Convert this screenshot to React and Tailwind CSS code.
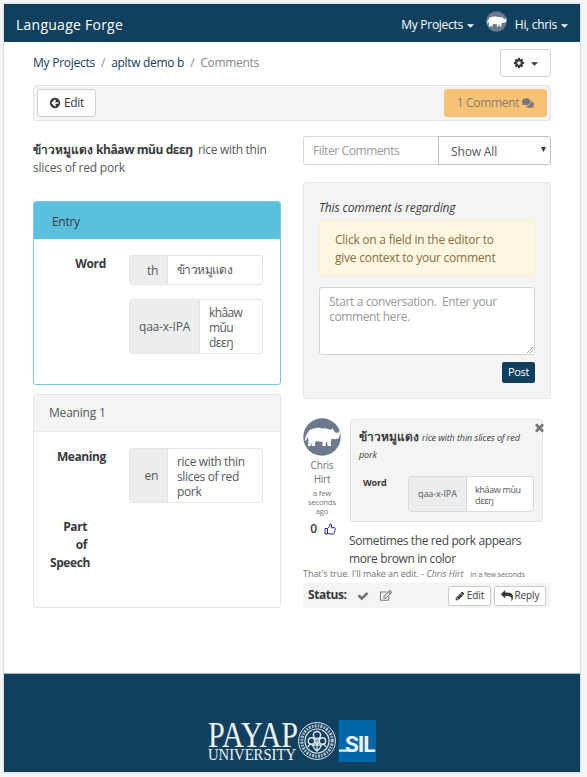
import React from "react";
import { FaComments, FaRegEdit } from "react-icons/fa";

const PATHS = {
  times:
    "M1490 1322q0 40-28 68l-136 136q-28 28-68 28t-68-28l-294-294-294 294q-28 28-68 28t-68-28l-136-136q-28-28-28-68t28-68l294-294-294-294q-28-28-28-68t28-68l136-136q28-28 68-28t68 28l294 294 294-294q28-28 68-28t68 28l136 136q28 28 28 68t-28 68l-294 294 294 294q28 28 28 68z",
  check:
    "M1671 566q0 40-28 68l-724 724-136 136q-28 28-68 28t-68-28l-136-136-362-362q-28-28-28-68t28-68l136-136q28-28 68-28t68 28l294 295 656-657q28-28 68-28t68 28l136 136q28 28 28 68z",
  back:
    "M1408 960v-128q0-26-19-45t-45-19h-502l189-189q19-19 19-45t-19-45l-91-91q-18-18-45-18t-45 18l-362 362-91 91q-18 18-18 45t18 45l91 91 362 362q18 18 45 18t45-18l91-91q18-18 18-45t-18-45l-189-189h502q26 0 45-19t19-45zm256-64q0 209-103 385.5t-279.5 279.5-385.5 103-385.5-103-279.5-279.5-103-385.5 103-385.5 279.5-279.5 385.5-103 385.5 103 279.5 279.5 103 385.5z",
  cog:
    "M1152 896q0-106-75-181t-181-75-181 75-75 181 75 181 181 75 181-75 75-181zm512-109v222q0 12-8 23t-20 13l-185 28q-19 54-39 91 35 50 107 138 10 12 10 25t-9 23q-27 37-99 108t-94 71q-12 0-26-9l-138-108q-44 23-91 38-16 136-29 186-7 28-36 28h-222q-14 0-24.5-8.5t-11.5-21.5l-28-184q-49-16-90-37l-141 107q-10 9-25 9-14 0-25-11-126-114-165-168-7-10-7-23 0-12 8-23 15-21 51-66.5t54-70.5q-27-50-41-99l-183-27q-13-2-21-12.5t-8-23.5v-222q0-12 8-23t19-13l186-28q14-46 39-92-40-57-107-138-10-12-10-24 0-10 9-23 26-36 98.5-107.5t94.5-71.5q13 0 26 10l138 107q44-23 91-38 16-136 29-186 7-28 36-28h222q14 0 24.5 8.5t11.5 21.5l28 184q49 16 90 37l142-107q9-9 24-9 13 0 25 10 129 119 165 170 7 8 7 22 0 12-8 23-15 21-51 66.5t-54 70.5q26 50 41 98l183 28q13 2 21 12.5t8 23.5z",
  pencil:
    "M491 1536l91-91-235-235-91 91v107h128v128h107zm523-928q0-22-22-22-10 0-17 7l-542 542q-7 7-7 17 0 22 22 22 10 0 17-7l542-542q7-7 7-17zm-54-192l416 416-832 832h-416v-416zm683 96q0 53-37 90l-166 166-416-416 166-165q36-38 90-38 53 0 91 38l235 234q37 39 37 91z",
  reply:
    "M1792 1120q0 166-127 451-3 7-10.5 24t-13.5 30-13 22q-12 17-28 17-15 0-23.5-10t-8.5-25q0-9 2.5-26.5t2.5-23.5q5-68 5-123 0-101-17.5-181t-48.5-138.5-80-101-105.5-69.5-133-42.5-154-21.5-175.5-6h-224v256q0 26-19 45t-45 19-45-19l-512-512q-19-19-19-45t19-45l512-512q19-19 45-19t45 19 19 45v256h224q713 0 875 403 53 134 53 333z",
};

function Icon({ name, className }) {
  return (
    <svg viewBox="0 0 1792 1792" fill="currentColor" className={className}>
      <path d={PATHS[name]} />
    </svg>
  );
}

function Caret({ className }) {
  return (
    <svg viewBox="0 0 8 4" fill="currentColor" className={className}>
      <path d="M0 0h8L4 4z" />
    </svg>
  );
}

function Rhino({ className }) {
  return (
    <svg viewBox="0 0 38 38" className={className}>
      <circle cx="19" cy="19" r="18.7" fill="#6b7b8d" />
      <path
        fill="#fff"
        d="M5.500 13.500C6.500 11.500 9 11 11 10.500c3-.9 5.500-.9 8 0 2.500-.4 4.500-.2 6.500.8l3 .5 1-2 .8 2.200 1.700 2.200 1.500 1 .8-1.500.6 1.800c1-.7 1.400-2 1.600-3.700.9 2.700.7 5-.3 7-.4 1.700-1.400 2.400-2.800 2.200-1.700.6-3.200.2-4.400-.4-.8 1.300-1.300 2.400-1.200 4l.2 3.400h-3.300l-.7-4.600-1.100 1.400-.4 3.200h-3l.1-4.600c-2.200.6-4.300.4-6.100-.3l-1.700 1.600.4 3.300H9l-.5-3-1 3H4.800l.7-4.500c-.5-1.700-.6-3.300-.3-5L2.500 23l-.7-.4c.4-3.600 1.700-6.500 3.700-9.100z"
      />
    </svg>
  );
}

function Field({ tag, tagClass, lines, className, textClass }) {
  return (
    <div className={"flex w-[134px] rounded-[3px] border border-[#e4e5e6] bg-white text-[#55595c] " + className}>
      <div className={"flex items-center bg-[#ebedee] text-[12px] border-r border-[#e0e1e2] whitespace-nowrap " + tagClass}>{tag}</div>
      <div className={"flex flex-col whitespace-nowrap pl-[9px] text-[12px] leading-[15px] " + textClass}>
        {lines.map((l) => (
          <span key={l}>{l}</span>
        ))}
      </div>
    </div>
  );
}

function Header() {
  return (
    <header className="flex h-[38px] items-center bg-[#11405f] pl-3 pr-3 text-[12px] text-white">
      <div className="mt-[3px] text-[14px] tracking-[0.25px]">Language Forge</div>
      <div className="ml-auto mt-[3px]">My Projects</div>
      <Caret className="ml-[4px] mt-[5px] h-[4px] w-[7px]" />
      <Rhino className="mb-[4px] ml-[12px] h-[21px] w-[21px]" />
      <div className="ml-[8px] mt-[3px]">Hi, chris</div>
      <Caret className="ml-[4px] mt-[5px] h-[4px] w-[7px]" />
    </header>
  );
}

function EntryColumn() {
  return (
    <div className="w-[248px]">
      <div className="h-[65px] whitespace-nowrap pt-[5px] text-[12px] leading-[18px] text-[#55595c]">
        <div className="flex">
          <b className="w-[63px] font-semibold tracking-normal text-[#373a3c]">ข้าวหมูแดง</b>
          <b className="w-[102px] font-bold tracking-[-0.42px] text-[#373a3c]">khâaw mǔu dɛɛŋ</b>
          <span>rice with thin</span>
        </div>
        <div className="tracking-[-0.2px]">slices of red pork</div>
      </div>

      <section className="h-[184px] rounded-[3px] border border-[#7ccbe0]">
        <div className="flex h-[37px] items-center rounded-t-[2px] bg-[#5bc0de] pl-[18px] pt-[2px] text-[12px] text-[#373a3c]">Entry</div>
        <div className="flex pt-4">
          <div className="w-[72px] text-right text-[12px] font-bold leading-[18px]">Word</div>
          <div className="ml-[23px]">
            <Field
              tag="th"
              tagClass="w-[38px] justify-end pr-[9px] pt-[2px]"
              lines={["ข้าวหมูแดง"]}
              className="h-[30px]"
              textClass="pt-[6px] tracking-[-0.6px]"
            />
            <Field
              tag="qaa-x-IPA"
              tagClass="w-[70px] pl-[9px] tracking-[-0.2px]"
              lines={["khâaw", "mǔu", "dɛɛŋ"]}
              className="mt-[14px] h-[55px]"
              textClass="pt-[5px] tracking-[-0.6px]"
            />
          </div>
        </div>
      </section>

      <section className="mt-[9px] h-[214px] rounded-[3px] border border-[#e5e5e5]">
        <div className="flex h-[37px] items-center border-b border-[#e9e9e9] bg-[#f4f4f4] pl-[15px] text-[12px] tracking-[-0.2px] text-[#55595c]">Meaning 1</div>
        <div className="flex pt-4">
          <div className="w-[72px] text-right text-[12px] font-bold leading-[18px] tracking-[-0.4px]">Meaning</div>
          <div className="ml-[23px]">
            <Field
              tag="en"
              tagClass="w-[38px] justify-end pr-[9px]"
              lines={["rice with thin", "slices of red", "pork"]}
              className="h-[55px]"
              textClass="pt-[5px] tracking-[-0.35px]"
            />
          </div>
        </div>
        <div className="mt-[15px] flex w-[56px] flex-col items-end text-[12px] font-bold leading-[18px] tracking-[-0.4px]">
          <span className="mr-[3px]">Part</span>
          <span className="mr-[3px]">of</span>
          <span>Speech</span>
        </div>
      </section>
    </div>
  );
}

function NewComment() {
  return (
    <section className="mt-[17px] h-[217px] rounded-[3px] border border-[#e6e6e6] bg-[#f4f4f4] px-[15px] pt-[16px]">
      <div className="text-[12px] italic leading-[18px] tracking-[-0.15px]">This comment is regarding</div>
      <div className="mt-[3px] h-[56px] whitespace-nowrap rounded-[3px] border border-[#faf0cb] bg-[#fdf7e2] pl-[15px] pt-[10px] text-[12px] leading-[18px] tracking-[-0.24px] text-[#8a6d3b]">
        <div>Click on a field in the editor to</div>
        <div>give context to your comment</div>
      </div>
      <div className="mt-[11px] flex h-[68px] justify-between rounded-[3px] border border-[#d4d4d4] bg-white pl-[9px] pt-[6px] text-[12px] leading-[15px] text-[#999]">
        <div className="whitespace-pre tracking-[-0.36px]">{"Start a conversation.  Enter your\ncomment here."}</div>
        <svg viewBox="0 0 6 6" className="mb-[1px] mr-[1px] h-[6px] w-[6px] self-end" stroke="#888" strokeWidth="0.8">
          <path d="M0 6L6 0M3 6L6 3" />
        </svg>
      </div>
      <div className="ml-auto mt-[7px] flex h-[21px] w-[33px] items-center justify-center rounded-[2px] bg-[#11405f] text-[11px] text-white">
        Post
      </div>
    </section>
  );
}

function Comment() {
  return (
    <section className="mt-[19px]">
      <div className="flex h-[132px]">
        <div className="flex w-[38px] flex-col items-center whitespace-nowrap text-[#6f7377]">
          <Rhino className="h-[38px] w-[38px]" />
          <div className="mt-[2px] text-center text-[10px] leading-[14px] tracking-[-0.2px]">
            <div>Chris</div>
            <div>Hirt</div>
          </div>
          <div className="mt-[3px] text-center text-[7.5px] leading-[9px] tracking-[-0.1px]">
            <div>a few</div>
            <div>seconds</div>
            <div>ago</div>
          </div>
          <div className="ml-[2px] mt-[4px] flex items-center gap-[7px] text-[12px] font-semibold leading-[18px] text-[#373a3c]">
            0
            <svg viewBox="0 0 12 12" className="h-[12px] w-[12px]" fill="none" stroke="#20209c" strokeWidth="1">
              <path d="M1 5.500h2.500V11H1z" />
              <path d="M3.500 5.500C5 4.500 5.800 3.500 6 1c1.700-.4 2.200 1 1.300 3.700h3.200c1 0 1.100 1.300.3 1.600.6.500.4 1.400-.2 1.600.4.500.2 1.300-.4 1.500.200.9-.300 1.600-1.200 1.600H6.500c-1.200 0-2-.5-3-.7" />
            </svg>
          </div>
        </div>
        <div className="ml-[9px] mt-px flex h-[103px] w-[193px] rounded-[3px] border border-[#e4e4e4] bg-[#f4f4f4] pl-[8px]">
          <div className="w-full whitespace-nowrap pt-[8px] tracking-[-0.1px]">
            <div className="flex h-[18px] items-center">
              <b className="w-[63px] text-[12px] font-semibold tracking-normal">ข้าวหมูแดง</b>
              <i className="mt-[2px] text-[9px]">rice with thin slices of red</i>
            </div>
            <div className="text-[9px] italic leading-[18px]">pork</div>
            <div className="mt-[12px] flex">
              <div className="w-[49px] pl-[4px] text-[9px] font-bold leading-[14px]">Word</div>
              <div className="flex h-[36px] w-[126px] rounded-[3px] border border-[#d9dadb] bg-white text-[9px] text-[#55595c]">
                <div className="flex w-[58px] items-center border-r border-[#d9dadb] bg-[#ebedee] pl-[9px]">qaa-x-IPA</div>
                <div className="pl-[8px] pt-[7px] leading-[11px] tracking-[-0.35px]">
                  <div>khâaw mǔu</div>
                  <div>dɛɛŋ</div>
                </div>
              </div>
            </div>
          </div>
        </div>
        <Icon name="times" className="-ml-[10px] mt-[3px] h-[13px] w-[13px] shrink-0 text-[#777]" />
      </div>
      <div className="-mt-[18px] whitespace-nowrap pl-[46px] text-[12px] leading-[18px] tracking-[-0.38px] text-[#45484b]">
        <div>Sometimes the red pork appears</div>
        <div>more brown in color</div>
      </div>
      <div className="flex h-[12px] items-center whitespace-nowrap text-[9px] tracking-[-0.05px] text-[#6f7377]">
        <span>
          That's true. I'll make an edit. - <i>Chris Hirt</i>
        </span>
        <span className="ml-[7px] mt-px text-[7.5px] tracking-[-0.2px]">in a few seconds</span>
      </div>
      <div className="mt-[3px] flex h-[25px] items-center rounded-[3px] bg-[#f4f4f4] pl-[5px] pr-[5px]">
        <b className="mb-[2px] text-[12px] tracking-[-0.45px]">Status:</b>
        <Icon name="check" className="ml-[11px] h-[12px] w-[12px] text-[#6f7377]" />
        <FaRegEdit className="ml-[11px] h-[11px] w-[12px] text-[#777]" />
        <div className="ml-auto flex h-[20px] w-[43px] items-center justify-center gap-[2px] rounded-[2px] border border-[#ccc] bg-white text-[10px] tracking-[-0.1px]">
          <Icon name="pencil" className="h-[10px] w-[10px]" />
          Edit
        </div>
        <div className="ml-[3px] flex h-[20px] w-[52px] items-center justify-center gap-[2px] rounded-[2px] border border-[#ccc] bg-white text-[10px] tracking-[-0.1px]">
          <Icon name="reply" className="h-[12px] w-[12px]" />
          Reply
        </div>
      </div>
    </section>
  );
}

function Footer() {
  return (
    <footer className="flex h-[99px] items-start border-t border-[#aabac5] bg-[#11405f] pl-[204px] pt-[36px]">
      <svg viewBox="0 -10 168 60" className="h-[60px] w-[168px]" fill="#eef2f5">
        <g fontFamily="Liberation Serif, serif" letterSpacing="0">
          <text x="0" y="26.500" fontSize="36" textLength="90" lengthAdjust="spacingAndGlyphs">PAYAP</text>
          <text x="0" y="39.800" fontSize="16.500" textLength="88" lengthAdjust="spacingAndGlyphs">UNIVERSITY</text>
        </g>
        <g fill="none" stroke="#dfe7ec">
          <circle cx="109" cy="21" r="18.400" strokeWidth="1" />
          <circle cx="109" cy="21" r="15.200" strokeWidth="3.200" strokeDasharray="1.500 1.100 2.200 1.200" opacity="0.75" />
          <circle cx="109" cy="21" r="12" strokeWidth="1.200" />
          <path strokeWidth="1.300" d="M109 20v11M105 25h8M100 27c2-4 4-3 5-1 1 3 3 4 4 5 1-1 3-2 4-5 1-2 3-3 5 1" />
          <circle cx="109" cy="15" r="3.600" strokeWidth="1.500" />
          <circle cx="103.500" cy="21" r="3.200" strokeWidth="1.400" />
          <circle cx="114.500" cy="21" r="3.200" strokeWidth="1.400" />
          <circle cx="109" cy="21" r="2.400" strokeWidth="1.500" />
        </g>
        <rect x="130.500" y="0" width="37.500" height="42" fill="#0068a9" />
        <path d="M131 29.500h12v2.200h-12z" />
        <text x="137" y="31.700" fontSize="22.500" fontWeight="700" fontFamily="Roboto, sans-serif" letterSpacing="0" textLength="30.500" lengthAdjust="spacing">SIL</text>
      </svg>
    </footer>
  );
}

export default function App() {
  return (
    <div className="h-[777px] w-[587px] overflow-hidden bg-[#f5f5f5] pl-[4px] pt-[4px] font-['Open_Sans','Noto_Sans',sans-serif] tracking-[-0.3px] text-[#373a3c]">
      <div className="h-[768px] w-[576px] bg-white shadow-[0_0_1px_1px_#e0e0e0]">
        <Header />
        <main className="h-[631px] pl-[29px] pr-[29px] pt-[7px]">
          <div className="flex h-[28px] items-center text-[12px]">
            <div className="flex gap-[6px] text-[#818a91]">
              <span className="tracking-[-0.25px] text-[#11405f]">My Projects</span>
              <span>/</span>
              <span className="text-[#11405f]">apltw demo b</span>
              <span>/</span>
              <span>Comments</span>
            </div>
            <div className="ml-auto flex h-[28px] w-[51px] items-center justify-center gap-[6px] rounded-[3px] border border-[#d4d4d4]">
              <Icon name="cog" className="h-[12px] w-[12px]" />
              <Caret className="mt-[2px] h-[4px] w-[7px]" />
            </div>
          </div>
          <div className="mt-[8px] flex h-[36px] items-center rounded-[3px] border border-[#e3e3e3] bg-[#f5f5f5] px-[3px] text-[12px]">
            <div className="flex h-[28px] w-[59px] items-center justify-center gap-[3px] rounded-[3px] border border-[#d0d0d0] bg-white">
              <Icon name="back" className="h-[12px] w-[12px]" />
              Edit
            </div>
            <div className="ml-auto flex h-[28px] w-[103px] items-center justify-center gap-[3px] rounded-[3px] bg-[#f8c275] text-[#85806f]">
              1 Comment
              <FaComments className="h-[12px] w-[12px] text-[#73777a]" />
            </div>
          </div>
          <div className="mt-[15px] flex justify-between">
            <EntryColumn />
            <div className="w-[248px]">
              <div className="flex h-[29px] text-[12px]">
                <div className="flex w-[135px] items-center rounded-l-[3px] border border-r-0 border-[#d9d9d9] pl-[9px] tracking-[-0.4px] text-[#999]">
                  Filter Comments
                </div>
                <div className="flex w-[113px] items-center justify-between rounded-r-[3px] border border-[#bfc0c1] pl-[12px] pr-[4px] text-[#55595c]">
                  <span className="mt-[2px] tracking-[-0.15px]">Show All</span>
                  <svg viewBox="0 0 5 5" className="mb-[2px] h-[5px] w-[5px]" fill="#333">
                    <path d="M0 0h5L2.500 5z" />
                  </svg>
                </div>
              </div>
              <NewComment />
              <Comment />
            </div>
          </div>
        </main>
        <Footer />
      </div>
    </div>
  );
}
